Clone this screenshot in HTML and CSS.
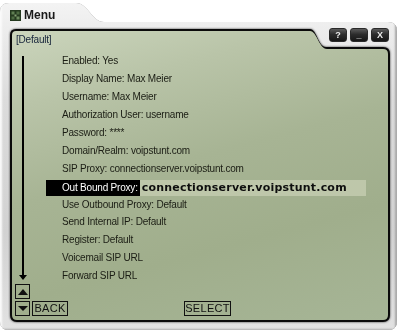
FILE: index.html
```html
<!DOCTYPE html>
<html lang="en">
<head>
    <meta charset="UTF-8">
    <meta name="viewport" content="width=device-width, initial-scale=1.0">
    <title>Menu</title>
    <link rel="stylesheet" href="styles.css">
</head>
<body>
    <div class="window-wrap">
        <div class="window">
            <div class="titlebar">
                <svg class="app-icon" width="11" height="11" viewBox="0 0 11 11">
                    <rect x="0" y="0" width="11" height="11" fill="#24391f"/>
                    <rect x="1.5" y="1.5" width="3" height="3" fill="#5f7f52"/>
                    <rect x="6.5" y="1.5" width="3" height="3" fill="#4d6b42"/>
                    <rect x="1.5" y="6.5" width="3" height="3" fill="#4d6b42"/>
                    <rect x="6.5" y="6.5" width="3" height="3" fill="#6c8c5e"/>
                    <rect x="4.5" y="4.5" width="2" height="2" fill="#86a276"/>
                </svg>
                <span class="title">Menu</span>
            </div>

            <div class="controls">
                <span class="ctl">?</span>
                <span class="ctl">_</span>
                <span class="ctl">X</span>
            </div>

            <div class="bezel-wrap">
                <div class="bezel">
                    <div class="screen">
                        <div class="preset">[Default]</div>

                        <div class="main">
                            <div class="track">
                                <div class="rail"></div>
                                <div class="rail-head"></div>
                                <div class="key arrow"><span class="tri up"></span></div>
                            </div>

                            <ul class="list">
                                <li class="row">Enabled: Yes</li>
                                <li class="row">Display Name: Max Meier</li>
                                <li class="row">Username: Max Meier</li>
                                <li class="row">Authorization User: username</li>
                                <li class="row">Password: ****</li>
                                <li class="row">Domain/Realm: voipstunt.com</li>
                                <li class="row">SIP Proxy: connectionserver.voipstunt.com</li>
                                <li class="row selected">
                                    <span class="sel-label">Out Bound Proxy:</span>
                                    <span class="sel-value">connectionserver.voipstunt.com</span>
                                </li>
                                <li class="row">Use Outbound Proxy: Default</li>
                                <li class="row">Send Internal IP: Default</li>
                                <li class="row">Register: Default</li>
                                <li class="row">Voicemail SIP URL</li>
                                <li class="row">Forward SIP URL</li>
                            </ul>
                        </div>

                        <div class="softkeys">
                            <div class="key arrow"><span class="tri down"></span></div>
                            <div class="key label back">BACK</div>
                            <div class="key label select">SELECT</div>
                        </div>
                    </div>
                </div>
            </div>
        </div>
    </div>
</body>
</html>
```

FILE: styles.css
```css
:root {
    --lcd-text: #1b1d14;
    --lcd-ink: #111;
}

* {
    margin: 0;
    padding: 0;
    box-sizing: border-box;
}

body {
    background: #fff;
    font-family: "Liberation Sans", Arial, sans-serif;
    overflow: hidden;
}

/* window chrome */
.window-wrap {
    width: 397px;
    height: 331px;
    filter: drop-shadow(0 0 0.7px #8a8a8a);
}

.window {
    position: relative;
    width: 397px;
    height: 331px;
    padding: 0 7px 9px 10px;
    background: linear-gradient(180deg, #f4f4f4 0%, #dcdcdc 30%, #d2d2d2 70%, #e2e2e2 100%);
    box-shadow: inset 2px 0 2px #fafafa, inset -2px -2px 2px #a9a9a9;
    clip-path: path('M0,12 Q0,3 9,3 L76,3 C88,3 92,22 104,22 L388,22 Q397,22 397,31 L397,321 Q397,330 388,330 L9,330 Q0,330 0,321 Z');
}

.titlebar {
    display: flex;
    align-items: center;
    gap: 3px;
    height: 29px;
    padding: 8px 0 7px 0;
}

.app-icon {
    display: block;
    flex: none;
}

.title {
    font-size: 12px;
    font-weight: bold;
    color: #1a1a1a;
    line-height: 14px;
}

.controls {
    position: absolute;
    top: 28px;
    left: 329px;
    display: flex;
    gap: 3px;
}

.ctl {
    width: 18px;
    height: 14px;
    border-radius: 3px;
    border: 1px solid #2a2a2a;
    background: linear-gradient(180deg, #5a5a5a 0%, #2c2c2c 45%, #161616 100%);
    color: #ececec;
    font-size: 9px;
    font-weight: bold;
    line-height: 12px;
    text-align: center;
}

/* LCD */
.bezel-wrap {
    filter: drop-shadow(0 0 1.2px #3c3c3c);
}

.bezel {
    width: 380px;
    height: 293px;
    padding: 2px;
    background: #0a0a0a;
    clip-path: path('M0,6 Q0,0 6,0 L300,0 C307,0 308,18 316,18 L373,18 Q380,18 380,25 L380,286 Q380,293 373,293 L7,293 Q0,293 0,286 Z');
}

.screen {
    display: flex;
    flex-direction: column;
    width: 376px;
    height: 289px;
    padding: 3px 0 4px 3px;
    background: linear-gradient(165deg, #cbd5bc 0%, #b9c4a8 20%, #a7b494 45%, #a0ae8c 70%, #a6b596 100%);
    clip-path: path('M0,4 Q0,0 4,0 L298,0 C305,0 307,18 315,18 L371,18 Q376,18 376,23 L376,284 Q376,289 371,289 L5,289 Q0,289 0,284 Z');
    color: var(--lcd-text);
    font-size: 10px;
    letter-spacing: -0.2px;
}

.preset {
    margin: 0 0 6px 1px;
    line-height: 12px;
    color: #16243a;
}

.main {
    flex: 1;
    display: flex;
    min-height: 0;
}

.track {
    width: 15px;
    display: flex;
    flex-direction: column;
    align-items: center;
}

.rail {
    flex: 1;
    width: 2px;
    margin-top: 4px;
    background: #000;
}

.rail-head {
    width: 0;
    height: 0;
    border-left: 4px solid transparent;
    border-right: 4px solid transparent;
    border-top: 5px solid #000;
    margin-bottom: 4px;
}

.list {
    list-style: none;
    margin-left: 16px;
}

.row {
    display: flex;
    align-items: center;
    height: 17.9px;
    padding-left: 16px;
    white-space: nowrap;
}

.row.selected {
    padding-left: 0;
    padding-top: 3px;
}

.sel-label {
    height: 16px;
    line-height: 16px;
    padding: 0 2px 0 16px;
    background: #000;
    color: #fff;
}

.sel-value {
    width: 226px;
    height: 16px;
    margin-top: 1px;
    padding-left: 2px;
    background: #bec7aa;
    color: #0e0e0e;
    font-family: "DejaVu Sans", Verdana, sans-serif;
    font-size: 11px;
    font-weight: bold;
    letter-spacing: 0.2px;
    line-height: 16px;
}

/* soft keys */
.softkeys {
    display: flex;
    margin-top: 2px;
    height: 15px;
}

.key {
    height: 15px;
    border: 1px solid var(--lcd-ink);
    display: flex;
    align-items: center;
    justify-content: center;
}

.key.arrow {
    width: 15px;
}

.tri {
    width: 0;
    height: 0;
    border-left: 5px solid transparent;
    border-right: 5px solid transparent;
}

.tri.up {
    border-bottom: 6px solid var(--lcd-ink);
}

.tri.down {
    border-top: 5px solid var(--lcd-ink);
}

.key.label {
    font-size: 11px;
    letter-spacing: 0.3px;
    line-height: 13px;
    color: var(--lcd-ink);
}

.back {
    width: 36px;
    margin-left: 2px;
}

.select {
    width: 47px;
    margin-left: 116px;
}
```
